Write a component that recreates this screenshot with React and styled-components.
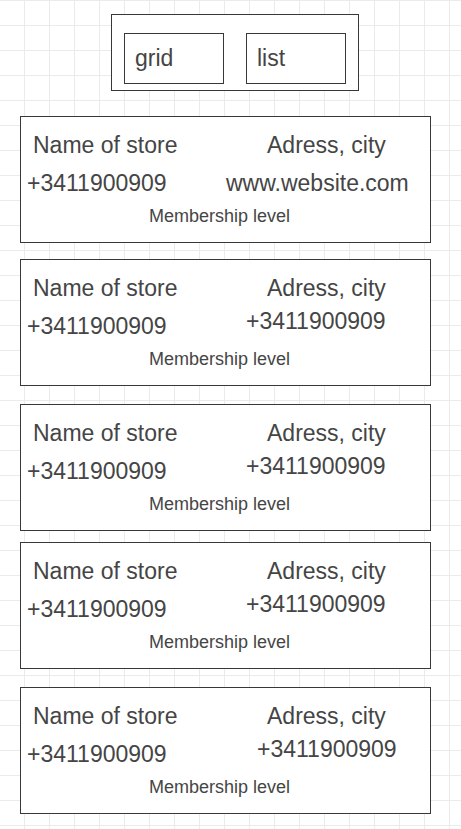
import { useState } from "react"
import styled, { createGlobalStyle } from "styled-components"

const stores = [
    { id: 1, contact: "www.website.com", contactIndent: 5, contactLift: 0, gap: 25 },
    { id: 2, contact: "+3411900909", contactIndent: 25, contactLift: 5, gap: 16 },
    { id: 3, contact: "+3411900909", contactIndent: 25, contactLift: 5, gap: 18 },
    { id: 4, contact: "+3411900909", contactIndent: 25, contactLift: 5, gap: 11 },
    { id: 5, contact: "+3411900909", contactIndent: 36, contactLift: 5, gap: 18 },
]

function StoreCard({store}){
    return(
        <Card $gap={store.gap}>
            <Row>
                <Cell $indent={12}>Name of store</Cell>
                <Cell $indent={46}>Adress, city</Cell>
            </Row>
            <Row $top={12}>
                <Cell $indent={6}>+3411900909</Cell>
                <Cell $indent={store.contactIndent} $lift={store.contactLift}>{store.contact}</Cell>
            </Row>
            <Membership>Membership level</Membership>
        </Card>
    )
}

function App(){
    const [view, setView] = useState("list")

    return(
    <>
        <GlobalStyle />
        <Page>
            <Toggle>
                <ToggleButton type="button" onClick={() => setView("grid")} aria-pressed={view === "grid"}>grid</ToggleButton>
                <ToggleButton type="button" onClick={() => setView("list")} aria-pressed={view === "list"}>list</ToggleButton>
            </Toggle>
            <StoreList>
                {stores.map(store => <StoreCard store={store} key={store.id} />)}
            </StoreList>
        </Page>
    </>
    )
}

export default App

const GlobalStyle = createGlobalStyle`
    html, body {
        margin: 0;
        padding: 0;
    }
    body {
        background-color: #ffffff;
        background-image:
            linear-gradient(to right, #ebebeb 1px, transparent 1px),
            linear-gradient(to bottom, #ebebeb 1px, transparent 1px);
        background-size: 25px 25px;
        background-position: 24px 0;
        font-family: "Liberation Sans", Arial, sans-serif;
        color: #454545;
    }
`

const Page = styled.div`
    width: 461px;
    min-height: 829px;
    padding-top: 14px;
    box-sizing: border-box;
`

const Toggle = styled.div`
    display: flex;
    gap: 22px;
    width: 248px;
    height: 77px;
    margin-left: 111px;
    padding: 18px 12px 0 12px;
    box-sizing: border-box;
    border: 1px solid #383838;
    background: #ffffff;
`

const ToggleButton = styled.button`
    display: flex;
    align-items: center;
    width: 100px;
    height: 51px;
    padding: 0 0 0 10px;
    box-sizing: border-box;
    border: 1px solid #383838;
    border-radius: 0;
    background: #ffffff;
    font-family: "Liberation Sans", Arial, sans-serif;
    font-size: 23px;
    color: #454545;
    cursor: pointer;
`

const StoreList = styled.div`
    display: flex;
    flex-direction: column;
    margin-left: 20px;
    padding-bottom: 16px;
`

const Card = styled.div`
    display: flex;
    flex-direction: column;
    width: 411px;
    height: 127px;
    margin-top: ${props => props.$gap}px;
    padding-top: 15px;
    box-sizing: border-box;
    border: 1px solid #383838;
    background: #ffffff;
`

const Row = styled.div`
    display: grid;
    grid-template-columns: 200px 1fr;
    margin-top: ${props => props.$top || 0}px;
`

const Cell = styled.div`
    padding-left: ${props => props.$indent}px;
    margin-top: ${props => -(props.$lift || 0)}px;
    font-size: 23px;
    line-height: 26px;
    white-space: nowrap;
`

const Membership = styled.div`
    margin-top: 10px;
    padding-left: 128px;
    font-size: 18px;
    line-height: 20px;
    white-space: nowrap;
`
